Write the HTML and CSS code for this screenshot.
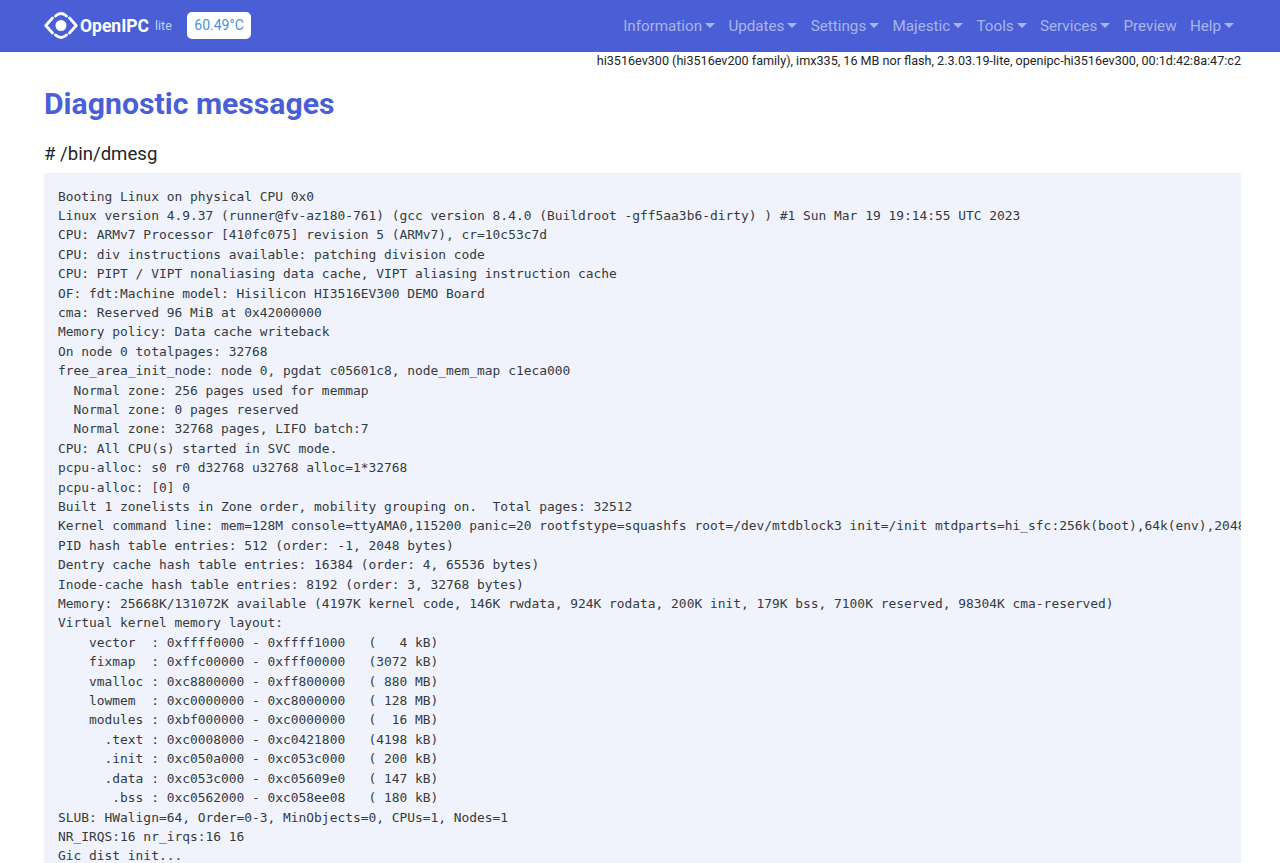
FILE: index.html
```html
<!DOCTYPE html>
<html lang="en">
<head>
<meta charset="utf-8">
<title>Diagnostic messages</title>
<link rel="stylesheet" href="styles.css">
</head>
<body>
<nav class="navbar">
  <a class="brand" href="#">
    <svg class="logo" viewBox="0 0 34 29" width="34" height="29" aria-hidden="true">
      <circle cx="17" cy="14.500" r="5.500" fill="#fff"/>
      <path d="M8.500 7 L1.800 14.500 L8.500 22 M25.500 7 L32.200 14.500 L25.500 22" fill="none" stroke="#fff" stroke-width="2.800" stroke-linecap="round" stroke-linejoin="round"/>
      <path d="M11.500 5 Q17 0 22.500 5 M11.500 24 Q17 29 22.500 24" fill="none" stroke="#fff" stroke-width="2.800" stroke-linecap="round"/>
    </svg>
    <span class="brand-name">OpenIPC</span>
    <span class="brand-lite">lite</span>
  </a>
  <span class="temp">60.49°C</span>
  <ul class="menu">
    <li class="caret">Information</li>
    <li class="caret">Updates</li>
    <li class="caret">Settings</li>
    <li class="caret">Majestic</li>
    <li class="caret">Tools</li>
    <li class="caret">Services</li>
    <li>Preview</li>
    <li class="caret">Help</li>
  </ul>
</nav>
<main class="container">
  <p class="device">hi3516ev300 (hi3516ev200 family), imx335, 16 MB nor flash, 2.3.03.19-lite, openipc-hi3516ev300, 00:1d:42:8a:47:c2</p>
  <h1>Diagnostic messages</h1>
  <h2># /bin/dmesg</h2>
  <pre class="log">Booting Linux on physical CPU 0x0
Linux version 4.9.37 (runner@fv-az180-761) (gcc version 8.4.0 (Buildroot -gff5aa3b6-dirty) ) #1 Sun Mar 19 19:14:55 UTC 2023
CPU: ARMv7 Processor [410fc075] revision 5 (ARMv7), cr=10c53c7d
CPU: div instructions available: patching division code
CPU: PIPT / VIPT nonaliasing data cache, VIPT aliasing instruction cache
OF: fdt:Machine model: Hisilicon HI3516EV300 DEMO Board
cma: Reserved 96 MiB at 0x42000000
Memory policy: Data cache writeback
On node 0 totalpages: 32768
free_area_init_node: node 0, pgdat c05601c8, node_mem_map c1eca000
  Normal zone: 256 pages used for memmap
  Normal zone: 0 pages reserved
  Normal zone: 32768 pages, LIFO batch:7
CPU: All CPU(s) started in SVC mode.
pcpu-alloc: s0 r0 d32768 u32768 alloc=1*32768
pcpu-alloc: [0] 0
Built 1 zonelists in Zone order, mobility grouping on.  Total pages: 32512
Kernel command line: mem=128M console=ttyAMA0,115200 panic=20 rootfstype=squashfs root=/dev/mtdblock3 init=/init mtdparts=hi_sfc:256k(boot),64k(env),2048k(kernel),5120k(rootfs),-(rootfs_data)
PID hash table entries: 512 (order: -1, 2048 bytes)
Dentry cache hash table entries: 16384 (order: 4, 65536 bytes)
Inode-cache hash table entries: 8192 (order: 3, 32768 bytes)
Memory: 25668K/131072K available (4197K kernel code, 146K rwdata, 924K rodata, 200K init, 179K bss, 7100K reserved, 98304K cma-reserved)
Virtual kernel memory layout:
    vector  : 0xffff0000 - 0xffff1000   (   4 kB)
    fixmap  : 0xffc00000 - 0xfff00000   (3072 kB)
    vmalloc : 0xc8800000 - 0xff800000   ( 880 MB)
    lowmem  : 0xc0000000 - 0xc8000000   ( 128 MB)
    modules : 0xbf000000 - 0xc0000000   (  16 MB)
      .text : 0xc0008000 - 0xc0421800   (4198 kB)
      .init : 0xc050a000 - 0xc053c000   ( 200 kB)
      .data : 0xc053c000 - 0xc05609e0   ( 147 kB)
       .bss : 0xc0562000 - 0xc058ee08   ( 180 kB)
SLUB: HWalign=64, Order=0-3, MinObjects=0, CPUs=1, Nodes=1
NR_IRQS:16 nr_irqs:16 16
Gic dist init...
</pre>
</main>
</body>
</html>
```

FILE: styles.css
```css
* { box-sizing: border-box; }
html, body { margin: 0; padding: 0; height: 863px; overflow: hidden; }
body { font-family: "Roboto", "Liberation Sans", sans-serif; color: #212529; background: #fff; }

.navbar { display: flex; align-items: center; height: 52px; padding: 0 39px 1px 44px; background: #4a5fd6; }
.brand { display: flex; align-items: center; color: #fff; text-decoration: none; }
.logo { display: block; }
.brand-name { margin-left: 2px; font-size: 17.500px; font-weight: 700; }
.brand-lite { margin-left: 6px; font-size: 12.500px; color: #c9d0f3; }
.temp { margin-left: 15px; padding: 5px 7.500px; border-radius: 5px; background: #fff; color: #4a90e2; font-size: 14px; line-height: 17px; }
.menu { display: flex; gap: 13.300px; margin: 0 7px 0 auto; padding: 0; list-style: none; color: #a9b4ec; font-size: 15.200px; }
.caret::after { content: ""; display: inline-block; margin-left: 3px; vertical-align: 3px; border-top: 5px solid #a9b4ec; border-left: 5px solid transparent; border-right: 5px solid transparent; }

.container { margin: 0 39px 0 44px; }
.device { margin: 0; text-align: right; font-size: 12.600px; line-height: 18px; }
h1 { margin: 16px 0 0; font-size: 30.200px; line-height: 36px; font-weight: 700; color: #4a5fd6; }
h2 { margin: 20px 0 0; font-size: 18.600px; line-height: 24px; font-weight: 400; }
.log { margin: 7px 0 0; padding: 13.500px 14px; overflow: hidden; background: #f0f3fc; color: #343a40; font-family: "DejaVu Sans Mono", "Liberation Mono", monospace; font-size: 12.900px; line-height: 19.400px; white-space: pre; }
```
